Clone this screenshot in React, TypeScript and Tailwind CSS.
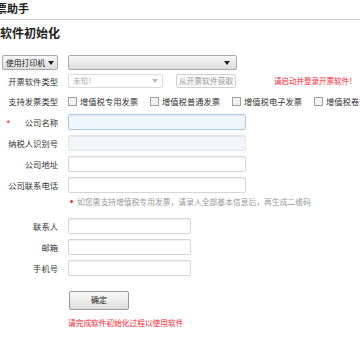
import React from "react";

const font = { fontFamily: '"Noto Sans CJK SC", "Noto Sans", sans-serif' };

function Caret({ color = "#222" }: { color?: string }) {
  return (
    <svg width="6" height="4" viewBox="0 0 6 4">
      <path d="M0 0h6L3 4z" fill={color} />
    </svg>
  );
}

function Label({ children, star }: { children: React.ReactNode; star?: boolean }) {
  return (
    <div className="relative w-[58px] shrink-0 text-right text-[8.3px] leading-none text-[#333]">
      {star && <span className="absolute left-[6px] top-[1px] text-[10px] text-[#e33]">*</span>}
      {children}
    </div>
  );
}

function Field({
  label,
  star,
  w = "w-[178px]",
  bg = "bg-white",
  border = "border-[#d6d6d6]",
}: {
  label: string;
  star?: boolean;
  w?: string;
  bg?: string;
  border?: string;
}) {
  return (
    <div className="flex items-center gap-[10px]">
      <Label star={star}>{label}</Label>
      <div className={`h-[16px] ${w} rounded-[2px] border ${border} ${bg} shadow-[inset_0_1px_1px_rgba(0,0,0,0.06)]`} />
    </div>
  );
}

function Check({ label }: { label: string }) {
  return (
    <div className="flex w-[82px] shrink-0 items-center gap-[3px] whitespace-nowrap text-[8.3px] leading-none text-[#333]">
      <span className="h-[9px] w-[9px] shrink-0 border border-[#a0a0a0] bg-[#f2f2f2]" />
      {label}
    </div>
  );
}

export default function App() {
  return (
    <div className="h-[360px] w-[360px] overflow-hidden bg-white" style={font}>
      <div className="-ml-[4px] h-[19px] pt-[3px] text-[11px] font-bold leading-none text-[#222]">
        票助手
      </div>
      <div className="h-px bg-[#cfcfcf]" />
      <div className="pt-[7px] text-[12px] font-bold leading-none text-[#222]">软件初始化</div>

      <div className="mt-[16px] flex items-center gap-[10px] pl-[2px]">
        <div className="flex h-[15px] w-[56px] items-center justify-between rounded-[2px] border border-[#a9a9a9] bg-gradient-to-b from-[#f8f8f8] to-[#dedede] px-[3px] text-[7.8px] leading-none text-[#222]">
          使用打印机
          <Caret />
        </div>
        <div className="flex h-[15px] w-[169px] items-center justify-end rounded-[2px] border border-[#a9a9a9] bg-gradient-to-b from-[#f8f8f8] to-[#dedede] px-[6px]">
          <Caret />
        </div>
      </div>

      <div className="mt-[4px] flex items-center gap-[10px]">
        <Label>开票软件类型</Label>
        <div className="flex h-[14px] w-[95px] items-center justify-between rounded-[2px] border border-[#dcdcdc] bg-white px-[4px] text-[7.5px] leading-none text-[#aaa]">
          未知！
          <Caret color="#bbb" />
        </div>
        <div className="ml-[3px] flex h-[14px] w-[60px] items-center justify-center rounded-[2px] border border-[#d0d0d0] bg-[#fafafa] text-[7.8px] leading-none text-[#999]">
          从开票软件获取
        </div>
        <div className="ml-[28px] whitespace-nowrap text-[7.5px] leading-none text-[#f23]">请启动并登录开票软件！</div>
      </div>

      <div className="mt-[9px] flex items-center gap-[10px]">
        <Label>支持发票类型</Label>
        <div className="flex">
          <Check label="增值税专用发票" />
          <Check label="增值税普通发票" />
          <Check label="增值税电子发票" />
          <Check label="增值税卷式发票" />
        </div>
      </div>

      <div className="mt-[8px] flex flex-col gap-[5px]">
        <Field label="公司名称" star bg="bg-[#f1f6fc]" border="border-[#a9cbe8]" />
        <Field label="纳税人识别号" bg="bg-[#f3f5f9]" border="border-[#e2e4e8]" />
        <Field label="公司地址" />
        <Field label="公司联系电话" />
      </div>

      <div className="mt-[5px] flex items-center gap-[4px] pl-[70px] text-[7.8px] leading-none text-[#999]">
        <span className="h-[3px] w-[3px] rounded-full bg-[#e33]" />
        如您需支持增值税专用发票，请录入全部基本信息后，再生成二维码
      </div>

      <div className="mt-[12px] flex flex-col gap-[5px]">
        <Field label="联系人" w="w-[123px]" />
        <Field label="邮箱" w="w-[123px]" />
        <Field label="手机号" w="w-[123px]" />
      </div>

      <div className="ml-[69px] mt-[15px] flex h-[19px] w-[60px] items-center justify-center rounded-[2px] border border-[#9a9a9a] bg-gradient-to-b from-[#f9f9f9] to-[#dcdcdc] text-[8px] leading-none text-[#222]">
        确定
      </div>
      <div className="ml-[68px] mt-[9px] text-[7.7px] leading-none text-[#f23]">请完成软件初始化过程以使用软件</div>
    </div>
  );
}
